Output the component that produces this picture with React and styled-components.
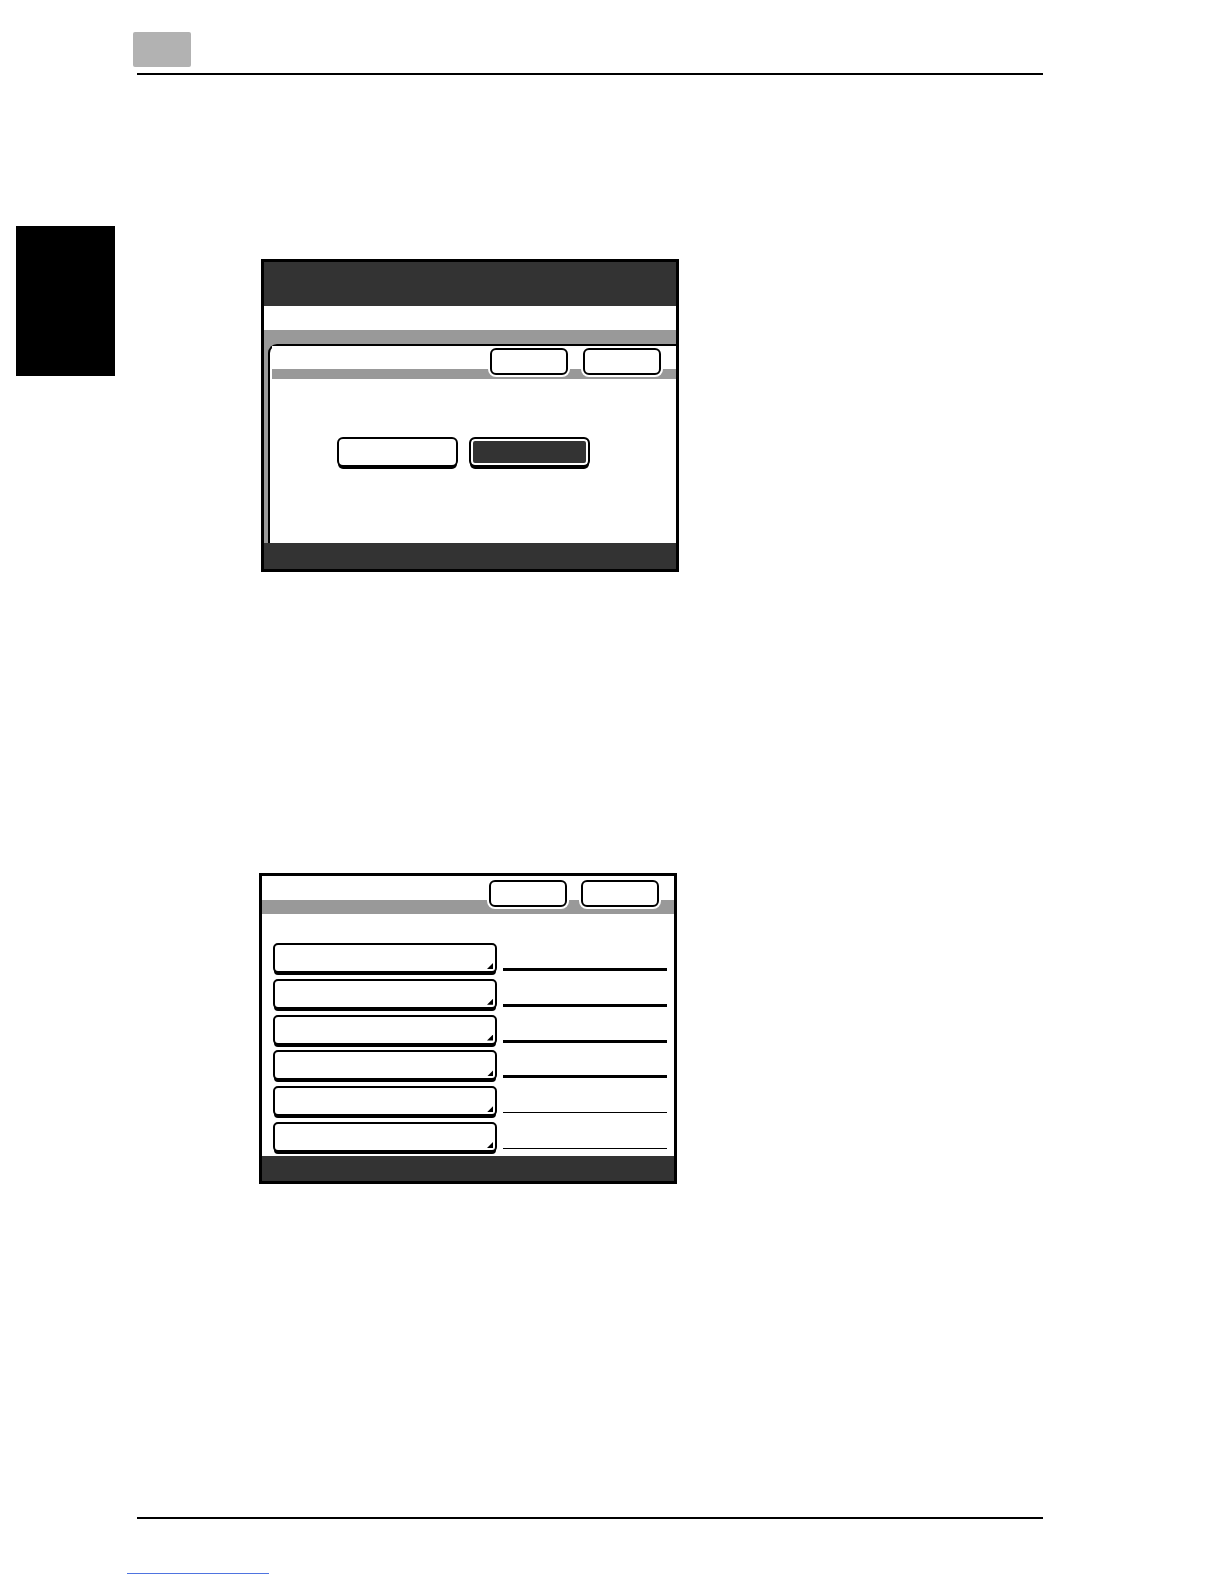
import React from 'react';
import styled, { createGlobalStyle, css } from 'styled-components';

const Global = createGlobalStyle`
  html, body { margin: 0; padding: 0; background: #fff; }
  body { font-family: "Liberation Sans", Arial, sans-serif; }
`;

const Page = styled.div`
  width: 1224px;
  height: 1584px;
  display: flex;
  flex-direction: column;
  background: #fff;
  overflow: hidden;
`;

const Header = styled.header`
  padding: 32px 0 0 133px;
`;

const PageChip = styled.div`
  width: 58px;
  height: 35px;
  background: #b2b2b2;
  border-radius: 2px;
`;

const Rule = styled.div`
  margin-left: 137px;
  width: 906px;
  height: 2px;
  background: #000;
  margin-top: ${p => p.$top || 0}px;
`;

const Main = styled.main`
  display: flex;
  align-items: flex-start;
`;

const SideTab = styled.div`
  margin: 151px 0 0 16px;
  width: 99px;
  height: 150px;
  background: #000;
`;

const Figures = styled.div`
  display: flex;
  flex-direction: column;
  margin-left: 146px;
`;

const Screen = styled.div`
  box-sizing: border-box;
  width: 418px;
  border: 3px solid #000;
  background: #fff;
  display: flex;
  flex-direction: column;
  margin-top: ${p => p.$top}px;
  margin-left: ${p => p.$left || 0}px;
`;

const TitleBar = styled.div`
  height: 44px;
  background: #333;
`;

const Strip = styled.div`
  height: ${p => p.$h}px;
  background: ${p => p.$c};
`;

const Body = styled.div`
  display: flex;
  height: 199px;
  background: #999;
  padding-left: 4px;
`;

const Card = styled.div`
  flex: 1;
  background: #fff;
  border-top: 2px solid #000;
  border-left: 2px solid #000;
  border-top-left-radius: 9px;
  display: flex;
  flex-direction: column;
`;

const CardHead = styled.div`
  height: 33px;
  margin-left: 2px;
  box-sizing: border-box;
  padding: 2px 15px 0 0;
  display: flex;
  justify-content: flex-end;
  gap: 15px;
  background: linear-gradient(to bottom, #fff 0 23px, #999 23px 33px, #fff 33px);
`;

const ScreenHead = styled.div`
  height: 38px;
  box-sizing: border-box;
  padding: 4px 15px 0 0;
  display: flex;
  justify-content: flex-end;
  gap: 14px;
  background: linear-gradient(to bottom, #fff 0 24px, #999 24px 38px);
`;

const Key = styled.div`
  box-sizing: border-box;
  width: 78px;
  height: 27px;
  background: #fff;
  border: 2px solid #000;
  border-radius: 6px;
  box-shadow: 0 0 0 2px #fff;
`;

const Choices = styled.div`
  display: flex;
  gap: 11px;
  padding: 58px 0 0 67px;
`;

const Choice = styled.div`
  box-sizing: border-box;
  width: 121px;
  height: 30px;
  border: 2px solid #000;
  border-radius: 6px;
  background: #fff;
  box-shadow: 0 3px 0 -1px #000;
  ${p => p.$active && css`
    background: #333;
    box-shadow: inset 0 0 0 2px #fff, 0 3px 0 -1px #000;
  `}
`;

const Footer = styled.div`
  height: ${p => p.$h || 26}px;
  background: #333;
`;

const List = styled.div`
  display: flex;
  flex-direction: column;
  gap: 5.8px;
  padding: 29px 0 4px 11px;
`;

const Row = styled.div`
  display: flex;
  align-items: flex-end;
  height: 30px;
`;

const Field = styled.div`
  position: relative;
  box-sizing: border-box;
  width: 224px;
  height: 30px;
  border: 2px solid #000;
  border-radius: 5px;
  background: #fff;
  box-shadow: 0 3px 0 -1px #000;

  &::after {
    content: '';
    position: absolute;
    right: 2px;
    bottom: 2px;
    width: 6px;
    height: 6px;
    background: #000;
    clip-path: polygon(100% 0, 100% 100%, 0 100%);
  }
`;

const Blank = styled.div`
  margin: 0 0 ${p => (p.$thin ? 3 : 2)}px 6px;
  width: 164px;
  height: ${p => (p.$thin ? 1 : 3)}px;
  background: #000;
`;

const Bottom = styled.footer`
  margin-top: auto;
  padding-bottom: 10px;
`;

const LinkLine = styled.div`
  margin: 54px 0 0 127px;
  width: 142px;
  height: 1px;
  background: #4f74e0;
`;

const rows = [false, false, false, false, true, true];

export default function App() {
  return (
    <Page>
      <Global />
      <Header>
        <PageChip />
      </Header>
      <Rule $top={6} />
      <Main>
        <SideTab />
        <Figures>
          <Screen $top={184}>
            <TitleBar />
            <Strip $h={24} $c="#fff" />
            <Strip $h={14} $c="#999" />
            <Body>
              <Card>
                <CardHead>
                  <Key />
                  <Key />
                </CardHead>
                <Choices>
                  <Choice />
                  <Choice $active />
                </Choices>
              </Card>
            </Body>
            <Footer />
          </Screen>

          <Screen $top={301} $left={-2}>
            <ScreenHead>
              <Key />
              <Key />
            </ScreenHead>
            <List>
              {rows.map((thin, i) => (
                <Row key={i}>
                  <Field />
                  <Blank $thin={thin} />
                </Row>
              ))}
            </List>
            <Footer $h={25} />
          </Screen>
        </Figures>
      </Main>
      <Bottom>
        <Rule />
        <LinkLine />
      </Bottom>
    </Page>
  );
}
